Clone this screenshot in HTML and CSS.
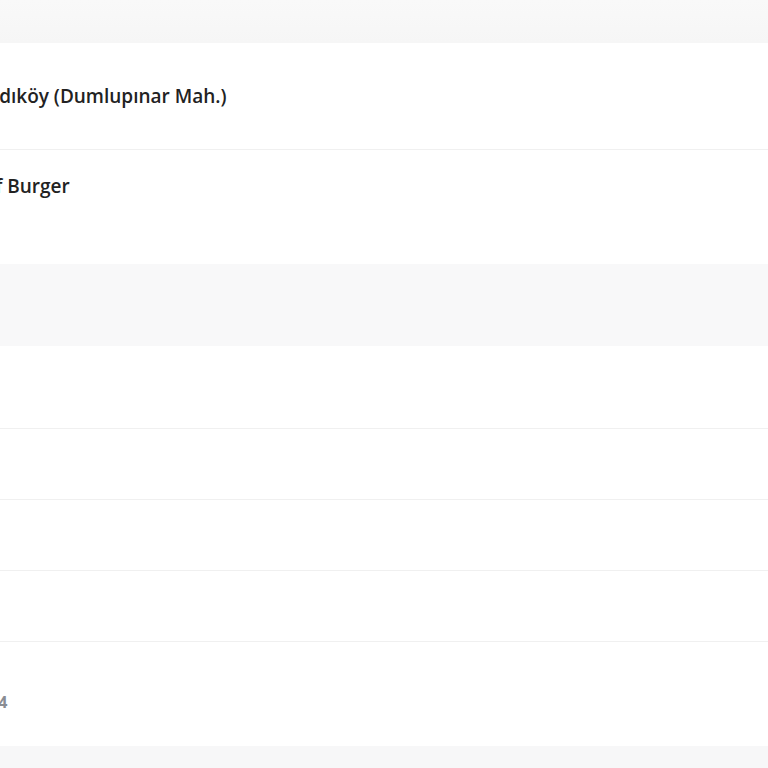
FILE: index.html
```html
<!DOCTYPE html>
<html lang="tr">
<head>
<meta charset="utf-8">
<link rel="stylesheet" href="styles.css">
</head>
<body>
<div class="page">
  <div class="band band-top"></div>
  <div class="row row-addr"><span class="title shift-addr">Kadıköy (Dumlupınar Mah.)</span></div>
  <div class="row row-item"><span class="title shift-item">Beef Burger</span></div>
  <div class="band band-mid"></div>
  <div class="row row-a"></div>
  <div class="row row-b"></div>
  <div class="row row-b"></div>
  <div class="row row-b"></div>
  <div class="row row-date"><span class="meta shift-date">12.03.2024</span></div>
  <div class="band band-bottom"></div>
</div>
</body>
</html>
```
FILE: styles.css
```css
html, body {
  margin: 0;
  padding: 0;
  background: #ffffff;
}
.page {
  width: 768px;
  height: 768px;
  overflow: hidden;
  display: flex;
  flex-direction: column;
  font-family: "Open Sans", "Noto Sans", sans-serif;
}
.band {
  background: #f8f8f9;
  flex: none;
}
.band-top {
  height: 43px;
  background: linear-gradient(#f9f9f9, #f6f6f6);
}
.band-mid {
  height: 82px;
}
.band-bottom {
  height: 22px;
  flex: 1;
  background: #f7f7f8;
}
.row {
  flex: none;
  background: #ffffff;
  border-bottom: 1px solid #f0f0f0;
  display: flex;
  overflow: hidden;
  white-space: nowrap;
}
.row-addr {
  height: 106px;
  align-items: center;
}
.row-item {
  height: 114px;
  border-bottom: none;
  align-items: flex-start;
  padding-top: 23px;
  box-sizing: border-box;
}
.row-a {
  height: 82px;
}
.row-b {
  height: 70px;
}
.row-date {
  height: 104px;
  border-bottom: none;
  align-items: center;
  padding-top: 16px;
  box-sizing: border-box;
}
.title {
  font-size: 19px;
  font-weight: 600;
  color: #222222;
}
.meta {
  font-size: 16px;
  font-weight: 700;
  color: #8a8d93;
}
.shift-addr {
  margin-left: -24px;
}
.shift-item {
  margin-left: -39px;
}
.shift-date {
  margin-left: -75px;
}
```
